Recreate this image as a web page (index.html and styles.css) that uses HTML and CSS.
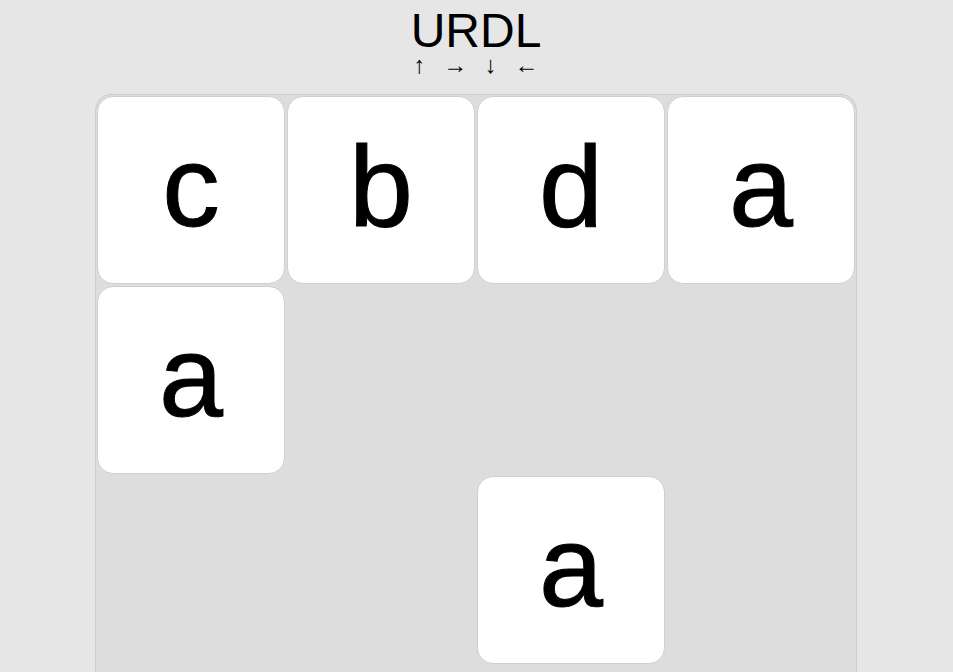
FILE: index.html
```html
<!DOCTYPE html>
<html>
<head>
  <meta charset="UTF-8">
  <title>URDL</title>
  <link rel="stylesheet" href="styles.css">
</head>
<body>
  <h1>URDL</h1>
  <div class="keys">&uarr; &rarr; &darr; &larr;</div>
  <div class="board">
    <div class="tile">c</div>
    <div class="tile">b</div>
    <div class="tile">d</div>
    <div class="tile">a</div>

    <div class="tile">a</div>
    <div class="cell"></div>
    <div class="cell"></div>
    <div class="cell"></div>

    <div class="cell"></div>
    <div class="cell"></div>
    <div class="tile">a</div>
    <div class="cell"></div>

    <div class="cell"></div>
    <div class="cell"></div>
    <div class="cell"></div>
    <div class="cell"></div>
  </div>
</body>
</html>
```

FILE: styles.css
```css
body { margin: 0; padding-right: 1px; background: #e6e6e6; font-family: "Liberation Sans", Arial, sans-serif; color: #000; text-align: center; }
h1 { margin: 0; padding-top: 8px; font-size: 48px; font-weight: normal; line-height: 46px; }
.keys { height: 24px; font-size: 24px; line-height: 22px; word-spacing: 11px; }
.board {
  display: grid;
  grid-template-columns: repeat(4, 188px);
  grid-auto-rows: 188px;
  gap: 2px;
  width: max-content;
  margin: 16px auto 0;
  padding: 1px;
  background: #dddddd;
  border: 1px solid #cccccc;
  border-radius: 16px;
}
.tile {
  display: flex;
  align-items: center;
  justify-content: center;
  box-sizing: border-box;
  background: #fff;
  border: 1px solid #cfcfcf;
  border-radius: 16px;
  font-size: 115px;
  line-height: 1;
  padding-bottom: 7px;
  -webkit-text-stroke: 1px #000;
}
```
